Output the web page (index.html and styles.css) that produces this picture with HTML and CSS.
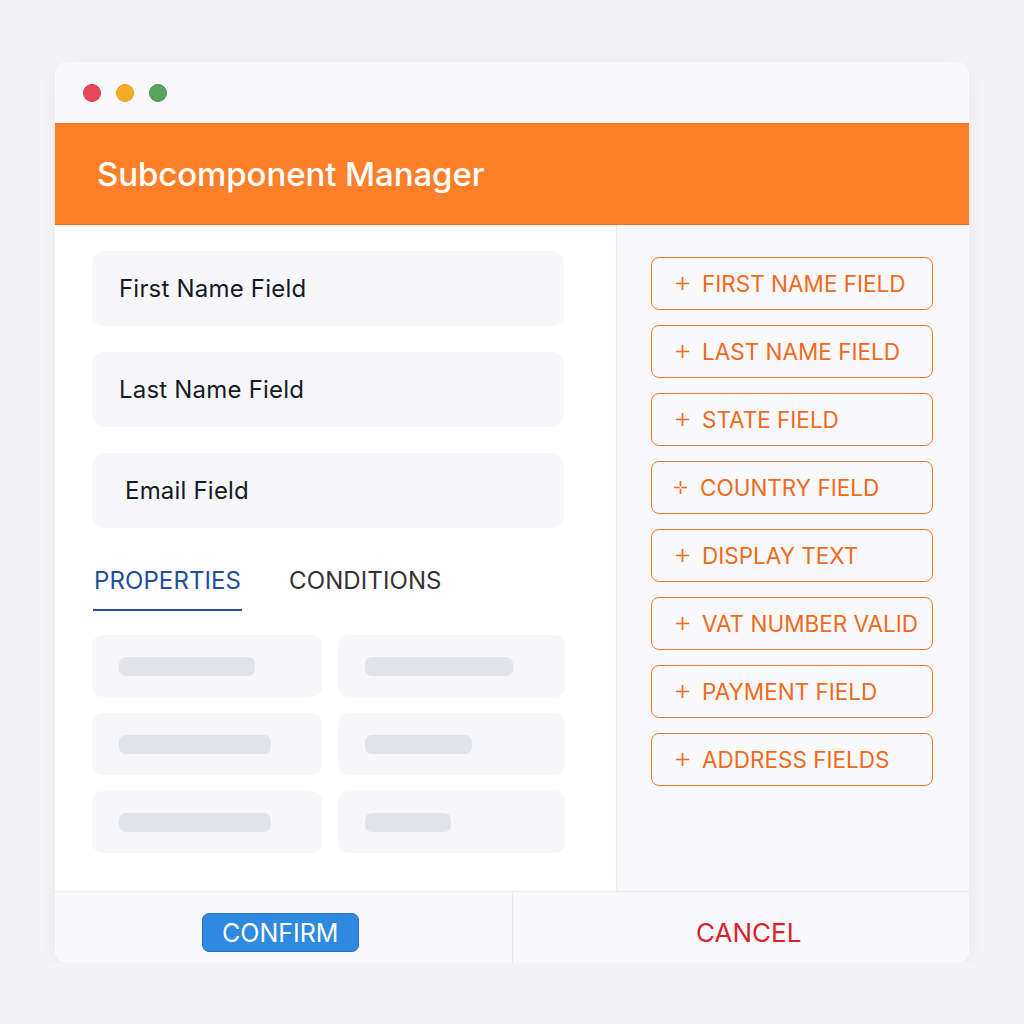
FILE: index.html
```html
<!DOCTYPE html>
<html lang="en">
  <head>
    <meta charset="UTF-8" />
    <meta name="viewport" content="width=device-width, initial-scale=1.0" />
    <title>Subcomponent Manager</title>
    <link rel="stylesheet" href="styles.css">
  </head>
  <body>
    <div class="window">
      <div class="titlebar">
        <span class="dot red"></span>
        <span class="dot yellow"></span>
        <span class="dot green"></span>
      </div>
      <div class="header">Subcomponent Manager</div>
      <div class="content">
        <div class="left">
          <div class="field">First Name Field</div>
          <div class="field">Last Name Field</div>
          <div class="field email">Email Field</div>

          <div class="tabs">
            <div class="tab active">PROPERTIES</div>
            <div class="tab">CONDITIONS</div>
          </div>

          <div class="props">
            <div class="prop"><span class="bar" style="width:136px"></span></div>
            <div class="prop"><span class="bar" style="width:148px"></span></div>
            <div class="prop"><span class="bar" style="width:152px"></span></div>
            <div class="prop"><span class="bar" style="width:107px"></span></div>
            <div class="prop"><span class="bar" style="width:152px"></span></div>
            <div class="prop"><span class="bar" style="width:86px"></span></div>
          </div>
        </div>
        <div class="right">
          <button class="add-btn"><svg class="plus" viewBox="0 0 16 16"><path d="M8 1v14M1 8h14"/></svg>FIRST NAME FIELD</button>
          <button class="add-btn"><svg class="plus" viewBox="0 0 16 16"><path d="M8 1v14M1 8h14"/></svg>LAST NAME FIELD</button>
          <button class="add-btn"><svg class="plus" viewBox="0 0 16 16"><path d="M8 1v14M1 8h14"/></svg>STATE FIELD</button>
          <button class="add-btn country"><svg class="plus" viewBox="0 0 16 16"><path d="M8 1v6M8 9v6M1 8h6M9 8h6"/></svg>COUNTRY FIELD</button>
          <button class="add-btn"><svg class="plus" viewBox="0 0 16 16"><path d="M8 1v14M1 8h14"/></svg>DISPLAY TEXT</button>
          <button class="add-btn"><svg class="plus" viewBox="0 0 16 16"><path d="M8 1v14M1 8h14"/></svg>VAT NUMBER VALID</button>
          <button class="add-btn"><svg class="plus" viewBox="0 0 16 16"><path d="M8 1v14M1 8h14"/></svg>PAYMENT FIELD</button>
          <button class="add-btn"><svg class="plus" viewBox="0 0 16 16"><path d="M8 1v14M1 8h14"/></svg>ADDRESS FIELDS</button>
        </div>
      </div>
      <div class="footer">
        <div class="footer-cell">
          <button id="confirm-btn">CONFIRM</button>
        </div>
        <div class="footer-cell">
          <button id="cancel-btn">CANCEL</button>
        </div>
      </div>
    </div>
  </body>
</html>
```

FILE: styles.css
```css
* {
  margin: 0;
  padding: 0;
  box-sizing: border-box;
}

body {
  background: #f4f4f7;
  font-family: Inter, "Noto Sans", sans-serif;
  padding: 62px 55px 0 55px;
}

.window {
  width: 914px;
  height: 901px;
  background: #fff;
  border-radius: 12px;
  overflow: hidden;
  box-shadow: 0 4px 18px rgba(0, 0, 0, 0.05);
  display: flex;
  flex-direction: column;
}

.titlebar {
  height: 61px;
  background: #f9f9fb;
  display: flex;
  align-items: center;
  gap: 15px;
  padding-left: 28px;
}

.dot {
  width: 18px;
  height: 18px;
  border-radius: 50%;
}

.red {
  background: #e8475a;
  border: 1px solid #d63a4c;
}

.yellow {
  background: #f7a928;
  border: 1px solid #eb9c1c;
}

.green {
  background: #5aa35d;
  border: 1px solid #4c954f;
}

.header {
  height: 102px;
  background: #fe7f2a;
  border-top: 1px solid #f07020;
  border-bottom: 1px solid #f07020;
  color: #fff;
  font-size: 33px;
  font-weight: 500;
  letter-spacing: -0.1px;
  display: flex;
  align-items: center;
  padding-left: 42px;
}

.content {
  flex: 1;
  display: flex;
}

.left {
  width: 562px;
  padding: 26px 52px 0 37px;
  border-right: 1px solid #ebebef;
  display: flex;
  flex-direction: column;
}

.field {
  height: 75px;
  background: #f7f7f9;
  border-radius: 12px;
  margin-bottom: 26px;
  display: flex;
  align-items: center;
  padding-left: 27px;
  font-size: 24px;
  letter-spacing: 0.2px;
  color: #141a26;
}

.field.email {
  padding-left: 33px;
  margin-bottom: 0;
}

.tabs {
  display: flex;
  gap: 46px;
  margin-top: 36px;
  padding-left: 1px;
}

.tab {
  font-size: 24px;
  letter-spacing: 0.1px;
  color: #333;
  padding: 2px 1px 14px 1px;
  border-bottom: 2px solid transparent;
}

.tab.active {
  color: #1f4e9c;
  border-bottom-color: #1f4e9c;
}

.props {
  display: grid;
  grid-template-columns: 230px 227px;
  column-gap: 16px;
  row-gap: 16px;
  margin-top: 24px;
}

.prop {
  height: 62px;
  background: #f7f7f9;
  border-radius: 10px;
  display: flex;
  align-items: center;
  padding-left: 27px;
}

.bar {
  display: block;
  height: 19px;
  background: #e2e3e8;
  border-radius: 7px;
}

.right {
  flex: 1;
  background: #f9f9fb;
  padding: 32px 0 0 34px;
  display: flex;
  flex-direction: column;
  gap: 15px;
}

.add-btn {
  width: 282px;
  height: 53px;
  background: transparent;
  border: 1.5px solid #f0782c;
  border-radius: 8px;
  color: #f06a1c;
  font-family: Inter, "Noto Sans", sans-serif;
  font-size: 22.5px;
  text-align: left;
  padding-left: 23px;
  display: flex;
  align-items: center;
}

.plus {
  width: 15px;
  height: 15px;
  margin-right: 12px;
  fill: none;
  stroke: #f06a1c;
  stroke-width: 1.8;
}

.add-btn.country {
  padding-left: 21px;
}

.footer {
  height: 72px;
  background: #f9f9fb;
  border-top: 1px solid #e8e8ec;
  display: flex;
}

.footer-cell {
  flex: 1;
  display: flex;
  justify-content: center;
  align-items: center;
  padding-top: 10px;
}

.footer-cell + .footer-cell {
  border-left: 1px solid #e8e8ec;
}

#confirm-btn {
  width: 157px;
  height: 39px;
  background: #2e8ae0;
  border: 1px solid #2474c4;
  border-radius: 7px;
  color: #fff;
  font-family: Inter, "Noto Sans", sans-serif;
  font-size: 25px;
  margin-right: 6px;
}

#cancel-btn {
  background: none;
  border: none;
  color: #d9232b;
  font-family: Inter, "Noto Sans", sans-serif;
  font-size: 26px;
  margin-left: 16px;
}
```
